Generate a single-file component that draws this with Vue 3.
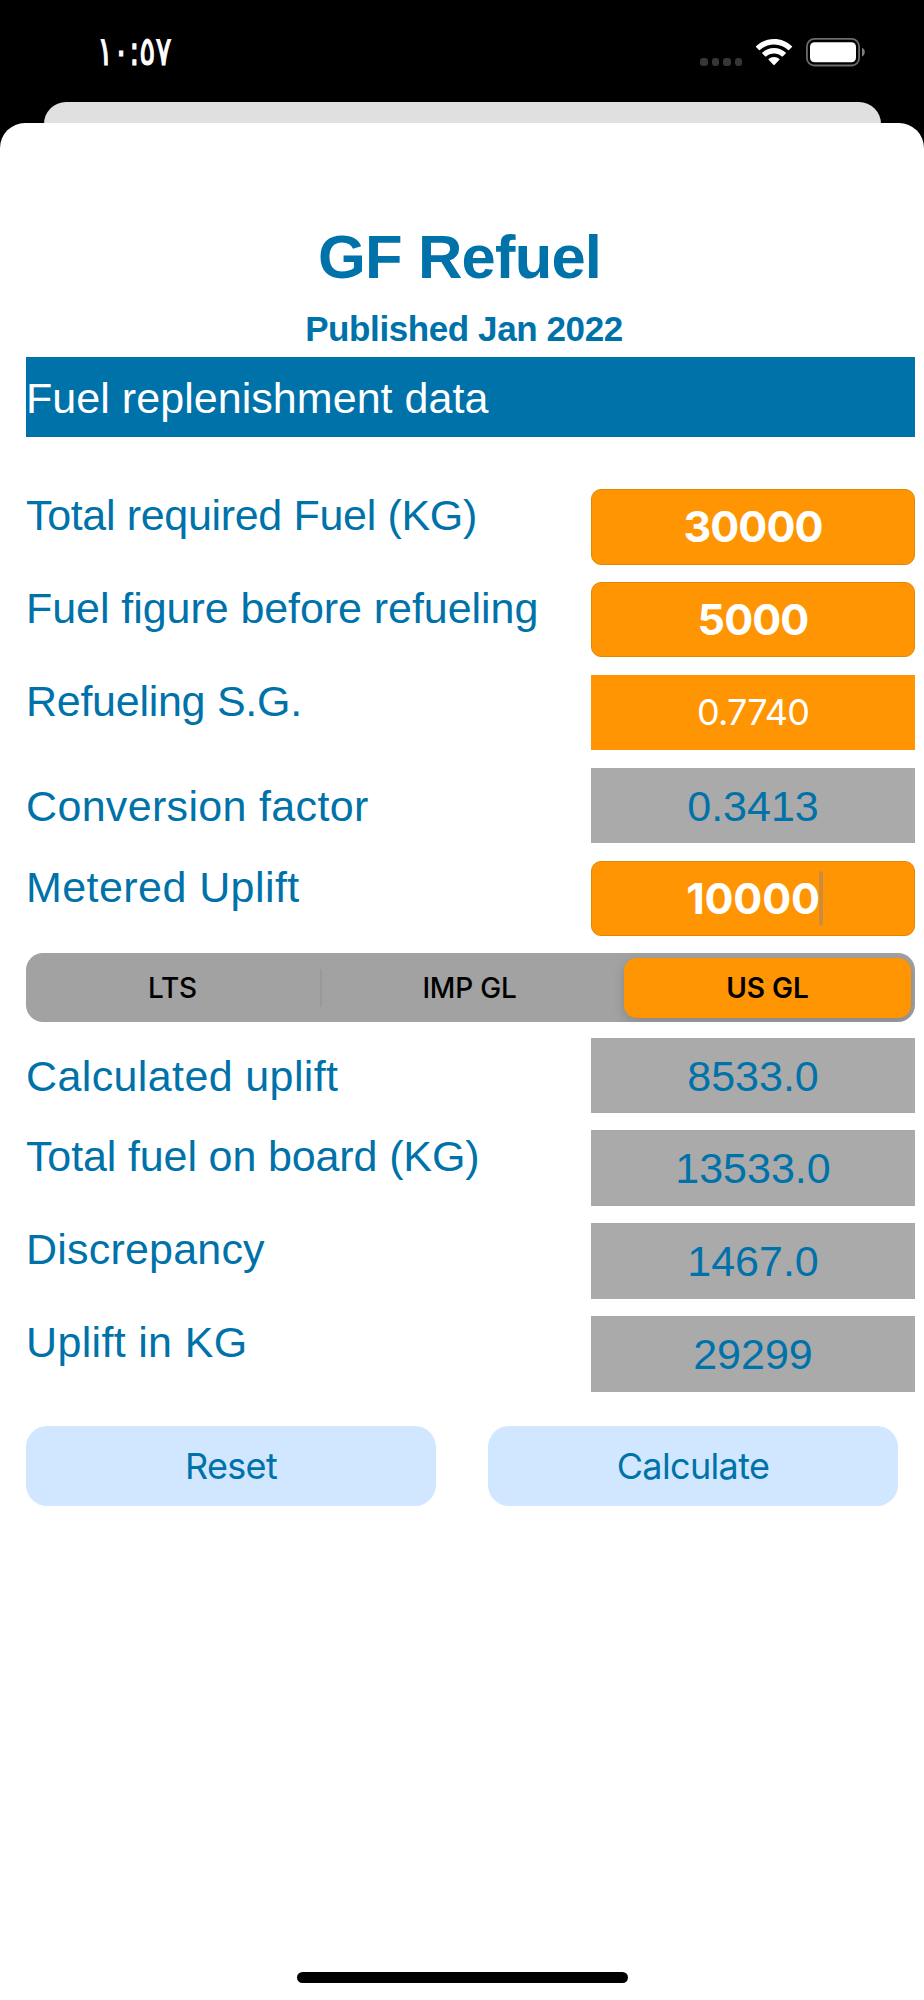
<template>
  <div class="phone">
    <!-- Status bar -->
    <header class="status">
      <span class="time">١٠:٥٧</span>
      <div class="indicators">
        <span class="dots" aria-hidden="true"><i></i><i></i><i></i><i></i></span>
        <svg class="wifi" viewBox="0 0 36 27" aria-hidden="true">
          <path d="M18 0C25 0 31.300 2.700 36 7.300Q36.400 7.700 36 8.100L33 11.100Q32.600 11.500 32.200 11.100C28.500 7.600 23.500 5.500 18 5.500S7.500 7.600 3.800 11.100Q3.400 11.500 3 11.100L0 8.100Q-.4 7.700 0 7.300C4.700 2.700 11 0 18 0Z" />
          <path d="M18 9C22.500 9 26.600 10.700 29.700 13.600Q30.100 14 29.700 14.400L26.700 17.400Q26.300 17.800 25.900 17.400C23.800 15.500 21 14.400 18 14.400S12.200 15.500 10.100 17.400Q9.700 17.800 9.300 17.400L6.300 14.400Q5.900 14 6.300 13.600C9.400 10.700 13.500 9 18 9Z" />
          <path d="M18 18C20.100 18 22 18.700 23.400 20Q23.800 20.400 23.400 20.800L18.400 25.900Q18 26.300 17.600 25.900L12.600 20.800Q12.200 20.400 12.600 20C14 18.700 15.900 18 18 18Z" />
        </svg>
        <svg class="battery" viewBox="0 0 60 29" aria-hidden="true">
          <rect x=".9" y=".9" width="52.200" height="26.600" rx="7.600" fill="none" stroke="#6b6b6b" stroke-width="1.800" />
          <rect x="4" y="4.200" width="46" height="20" rx="4.500" fill="#fff" />
          <path d="M56 9.800C59.700 11.500 59.700 17 56 18.600Z" fill="#7f7f7f" />
        </svg>
      </div>
    </header>

    <div class="card-behind"></div>

    <!-- Sheet -->
    <main class="sheet">
      <h1 class="title">GF Refuel</h1>
      <p class="published">Published Jan 2022</p>
      <h2 class="banner">Fuel replenishment data</h2>

      <section class="rows">
        <div v-for="row in inputs" :key="row.label" class="row">
          <span class="label" :class="{ middle: row.middle }" :style="{ letterSpacing: row.tracking }">{{ row.label }}</span>
          <span class="box" :class="[row.kind, { focused: row.focused }]">
            <span class="value">{{ row.value }}<i v-if="row.focused" class="caret"></i></span>
          </span>
        </div>
      </section>

      <div class="segments" role="tablist">
        <button
          v-for="unit in units"
          :key="unit"
          class="segment"
          :class="{ selected: unit === selectedUnit }"
          role="tab"
          @click="selectedUnit = unit"
        >{{ unit }}</button>
      </div>

      <section class="rows">
        <div v-for="row in results" :key="row.label" class="row">
          <span class="label" :class="{ middle: row.middle }" :style="{ letterSpacing: row.tracking }">{{ row.label }}</span>
          <span class="box result"><span class="value">{{ row.value }}</span></span>
        </div>
      </section>

      <div class="actions">
        <button class="action">Reset</button>
        <button class="action">Calculate</button>
      </div>

      <div class="home-indicator"></div>
    </main>
  </div>
</template>

<script setup>
import { ref } from 'vue'

const inputs = [
  { label: 'Total required Fuel (KG)', value: '30000', kind: 'field', tracking: '-.33px' },
  { label: 'Fuel figure before refueling', value: '5000', kind: 'field', tracking: '-.06px' },
  { label: 'Refueling S.G.', value: '0.7740', kind: 'picker', tracking: '-.27px' },
  { label: 'Conversion factor', value: '0.3413', kind: 'result', middle: true, tracking: '.33px' },
  { label: 'Metered Uplift', value: '10000', kind: 'field', focused: true, tracking: '.43px' }
]

const results = [
  { label: 'Calculated uplift', value: '8533.0', middle: true, tracking: '.38px' },
  { label: 'Total fuel on board (KG)', value: '13533.0', tracking: '-.13px' },
  { label: 'Discrepancy', value: '1467.0', tracking: '.2px' },
  { label: 'Uplift in KG', value: '29299', tracking: '.33px' }
]

const units = ['LTS', 'IMP GL', 'US GL']
const selectedUnit = ref('US GL')
</script>

<style>
body { margin: 0; background: #000; }
</style>

<style scoped>
.phone {
  --blue: #0072aa;
  --orange: #ff9502;
  --grey: #aaaaaa;
  width: 924px;
  height: 2000px;
  display: flex;
  flex-direction: column;
  background: #000;
  overflow: hidden;
  font-family: "Liberation Sans", Arial, sans-serif;
}

/* ====== status bar ====== */
.status {
  box-sizing: border-box;
  height: 101.500px;
  flex: none;
  display: flex;
  justify-content: space-between;
  align-items: flex-start;
  padding: 37px 58px 0 97px;
  color: #fff;
}
.time {
  font: 400 40px/28px "DejaVu Sans", sans-serif;
  letter-spacing: -8px;
  -webkit-text-stroke: 1.200px #fff;
  direction: ltr;
  transform: scaleX(.75);
  transform-origin: left;
}
.indicators {
  display: flex;
  align-items: flex-start;
  padding-top: 1px;
}
.dots {
  display: flex;
  gap: 4px;
  margin: 20px 14px 0 0;
}
.dots i {
  width: 7.500px;
  height: 8px;
  border-radius: 3px;
  background: #363636;
}
.wifi {
  width: 36px;
  height: 27px;
  margin: 1px 14px 0 0;
  fill: #fff;
  overflow: visible;
}
.battery { width: 60px; height: 29px; }

/* ====== cards ====== */
.card-behind {
  flex: none;
  height: 50px;
  margin: 0 43.500px -28.500px;
  border-radius: 22px 22px 0 0;
  background: #e0e0e0;
}
.sheet {
  position: relative;
  box-sizing: border-box;
  flex: 1;
  display: flex;
  flex-direction: column;
  padding: 101px 9px 0 26px;
  border-radius: 25px 25px 0 0;
  background: #fff;
}

.title {
  margin: 0 22px 0 0;
  font-size: 61.500px;
  line-height: 66px;
  letter-spacing: -.8px;
  text-align: center;
  color: var(--blue);
}
.published {
  margin: 20px 0 10px;
  padding-right: 13px;
  font-size: 35px;
  font-weight: 700;
  line-height: 37px;
  letter-spacing: -.4px;
  text-align: center;
  color: var(--blue);
}
.banner {
  margin: 0 0 52px;
  padding-top: 2px;
  height: 78px;
  font-size: 43px;
  font-weight: 400;
  line-height: 78px;
  letter-spacing: .05px;
  color: #fff;
  background: var(--blue);
}

/* ====== rows ====== */
.rows {
  display: flex;
  flex-direction: column;
  gap: 17.400px;
}
.row {
  display: flex;
  justify-content: space-between;
  height: 75.500px;
}
.label {
  font-size: 43px;
  line-height: 52px;
  white-space: nowrap;
  color: var(--blue);
}
.label.middle { line-height: 77.500px; }
.box {
  box-sizing: border-box;
  width: 324px;
  text-align: center;
  color: #fff;
  background: var(--orange);
}
.value { position: relative; }
.field {
  border: 1px solid #e58602;
  border-radius: 10px;
  font: 700 43px/73.500px Inter, sans-serif;
  letter-spacing: -.9px;
}
.field.focused { letter-spacing: -.2px; }
.picker {
  font: 400 36px/75.500px Inter, sans-serif;
  letter-spacing: -.8px;
}
.result {
  font-size: 43px;
  line-height: 77.500px;
  color: var(--blue);
  background: var(--grey);
}

/* blinking text cursor, caught half faded */
.caret {
  position: absolute;
  top: -1px;
  right: -3px;
  width: 4px;
  height: 55px;
  border-radius: 2px;
  background: #cc8c3f;
}

/* ====== unit switch ====== */
.segments {
  box-sizing: border-box;
  display: grid;
  grid-template-columns: 287px 307px 287px;
  height: 69px;
  margin: 17px 0 15.500px;
  padding: 4.500px 4px;
  border-radius: 17px;
  background: #a2a2a2;
  overflow: hidden;
}
.segment {
  position: relative;
  padding: 0;
  border: 0;
  border-radius: 13px;
  background: none;
  font: 500 28px/60px Inter, sans-serif;
  color: #000;
}
.segment:not(.selected) {
  padding-right: 2px;
  letter-spacing: -.2px;
}
.segment:first-child::after {
  content: "";
  position: absolute;
  top: 11px;
  right: -5px;
  width: 2px;
  height: 38px;
  background: #999;
}
.selected {
  font-weight: 600;
  background: var(--orange);
  box-shadow: 0 4px 12px rgba(0, 0, 0, .16);
}

/* ====== buttons ====== */
.actions {
  display: grid;
  grid-template-columns: 410px 410px;
  gap: 52px;
  margin-top: 34.500px;
}
.action {
  height: 80px;
  padding: 0;
  border: 0;
  border-radius: 21px;
  background: #d1e7ff;
  font: 400 36px/80px Inter, sans-serif;
  letter-spacing: -.65px;
  color: var(--blue);
}

.home-indicator {
  position: absolute;
  left: 297px;
  bottom: 17.500px;
  width: 331px;
  height: 11px;
  border-radius: 6px;
  background: #000;
}
</style>
